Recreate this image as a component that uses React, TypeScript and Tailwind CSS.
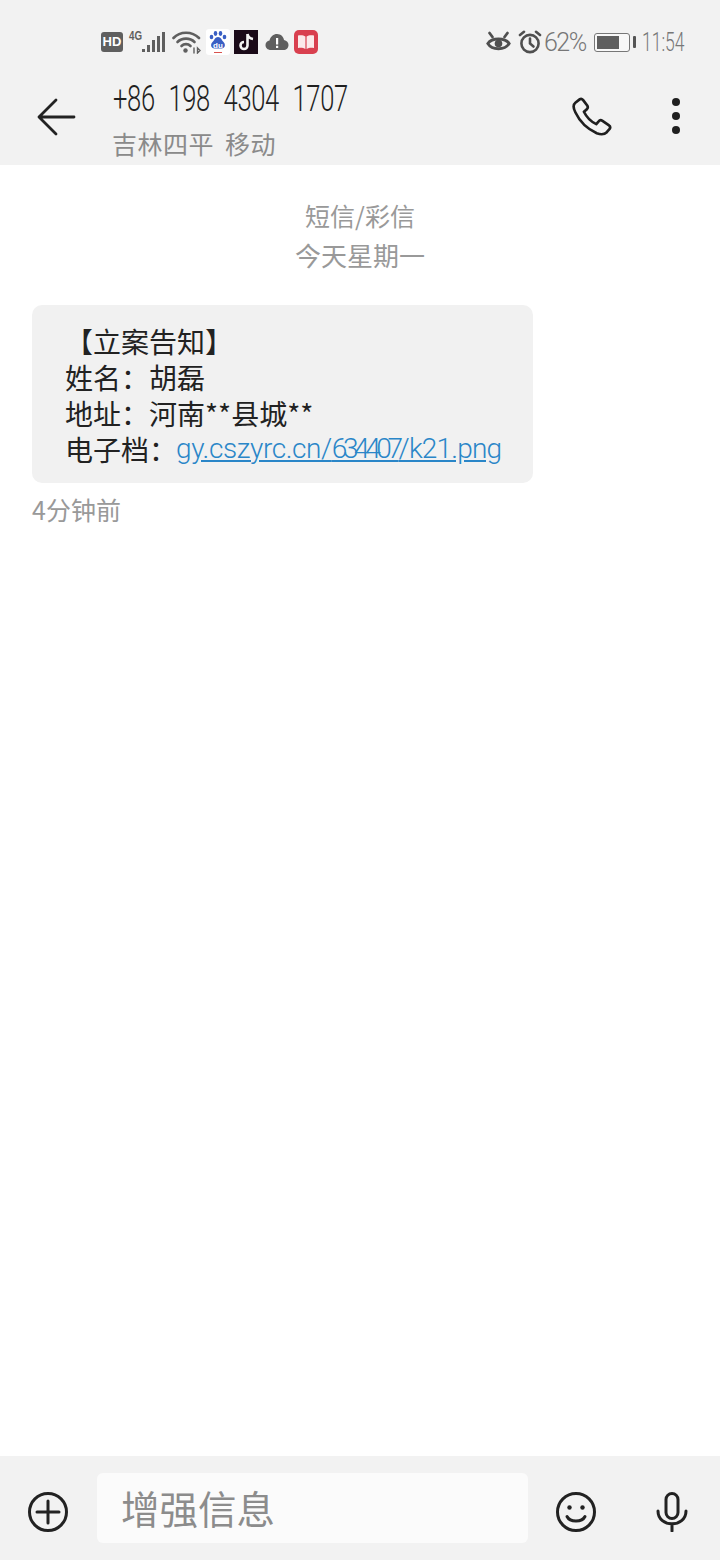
import React from 'react';

const cjk = { fontFamily: '"Noto Sans CJK SC", sans-serif' };

const HdBadge = () => (
  <span className="w-[22px] h-[20px] rounded-[3px] bg-[#5f5f5f] text-white text-[13px] font-bold leading-[20px] text-center font-['Liberation_Sans',sans-serif]">HD</span>
);

const SignalIcon = () => (
  <svg width="38" height="26" viewBox="0 0 38 26" fill="#5f5f5f">
    <text x="1" y="11" fontSize="12" fontWeight="700" fontFamily="Liberation Sans, sans-serif" textLength="13" lengthAdjust="spacingAndGlyphs">4G</text>
    <rect x="14" y="20" width="3" height="3" />
    <rect x="19" y="16" width="3" height="7" />
    <rect x="24" y="11" width="3" height="12" />
    <rect x="29" y="7" width="3" height="16" />
    <rect x="34" y="3" width="3" height="20" />
  </svg>
);

const WifiIcon = () => (
  <svg width="29" height="24" viewBox="0 0 29 24" fill="none" stroke="#5f5f5f" strokeWidth="2.6" strokeLinecap="round">
    <path d="M1.5 8 C8 1 20 1 27 8" />
    <path d="M5.5 12 C10 7.5 18 7.5 22.5 12" />
    <path d="M9.5 16 C12 13.5 16 13.5 18.5 16" />
    <circle cx="13.5" cy="20.5" r="2.2" fill="#5f5f5f" stroke="none" />
    <path d="M22 18 v5 M25.5 18 l2.5 2.5 -2.5 2.5z" strokeWidth="1.4" />
  </svg>
);

const BaiduIcon = () => (
  <span className="w-[24px] h-[26px] bg-white rounded-[3px] flex items-center justify-center">
    <svg width="20" height="24" viewBox="0 0 20 24">
      <g fill="#3a5fc4">
        <ellipse cx="3.5" cy="7" rx="1.8" ry="2.2" />
        <ellipse cx="7.5" cy="3.5" rx="1.8" ry="2.4" />
        <ellipse cx="12.5" cy="3.5" rx="1.8" ry="2.4" />
        <ellipse cx="16.5" cy="7" rx="1.8" ry="2.2" />
        <path d="M10 7 C7 7 6.5 10 4.5 12 C2 14.5 3 18.5 6.5 18.5 L13.5 18.5 C17 18.5 18 14.5 15.5 12 C13.5 10 13 7 10 7 Z" />
      </g>
      <text x="10" y="17.5" textAnchor="middle" fontSize="8" fontWeight="700" fill="#fff" fontFamily="Liberation Sans, sans-serif">du</text>
      <rect x="6" y="22" width="8" height="1" fill="#d9534f" />
    </svg>
  </span>
);

const TiktokIcon = () => (
  <span className="w-[24px] h-[24px] bg-[#1a0a18] flex items-center justify-center">
    <svg width="16" height="18" viewBox="0 0 16 18" fill="none" strokeWidth="2.6">
      <path d="M9.5 1 V12.5 A3.5 3.5 0 1 1 6 9 M9.5 1 C10 4 12 5.5 15 6" stroke="#f3f3f3" />
    </svg>
  </span>
);

const CloudIcon = () => (
  <svg width="24" height="18" viewBox="0 0 24 18">
    <path d="M6 17 C2.5 17 0.5 14.7 0.5 12 C0.5 9.5 2.3 7.8 4.5 7.5 C5.5 3.5 8.5 1 12 1 C16 1 18.5 3.8 19 7 C21.8 7.5 23.5 9.5 23.5 12 C23.5 15 21.3 17 18.5 17 Z" fill="#5f5f5f" />
    <rect x="11" y="5" width="2.2" height="6.5" fill="#fff" />
    <rect x="11" y="12.8" width="2.2" height="2.2" fill="#fff" />
  </svg>
);

const BooksIcon = () => (
  <span className="w-[24px] h-[24px] rounded-[5px] bg-[#d9404f] flex items-center justify-center">
    <svg width="18" height="16" viewBox="0 0 18 16" fill="#fbeaea">
      <path d="M1 1.5 C4 1 6.5 1.2 8.4 2.5 V15 C6.5 13.8 4 13.5 1 14 Z" />
      <path d="M17 1.5 C14 1 11.5 1.2 9.6 2.5 V15 C11.5 13.8 14 13.5 17 14 Z" />
    </svg>
  </span>
);

const EyeIcon = () => (
  <svg width="25" height="22" viewBox="0 0 25 22" fill="none" stroke="#4f4f4f" strokeWidth="2.8" strokeLinecap="round">
    <path d="M1.8 12.5 C6 6.5 19 6.5 23.2 12.5 C19 19.5 6 19.5 1.8 12.5 Z" />
    <circle cx="12.5" cy="12.5" r="3.8" fill="#4f4f4f" stroke="none" />
    <path d="M3.5 2 L6.5 6 M21.5 2 L18.5 6" />
  </svg>
);

const AlarmIcon = () => (
  <svg width="24" height="24" viewBox="0 0 24 24" fill="none" stroke="#4f4f4f" strokeWidth="2.6" strokeLinecap="round">
    <circle cx="12" cy="13.5" r="8.6" />
    <path d="M12 8.5 V13.5 L15.5 16.5" />
    <path d="M2 5 L6 1.8 M22 5 L18 1.8" />
  </svg>
);

const BatteryIcon = () => (
  <div className="flex items-center gap-[3px]">
    <div className="w-[36px] h-[19px] border-[1.5px] border-[#777] rounded-[3px] p-[2px] bg-[#f8f8f8]">
      <div className="w-[22px] h-full bg-[#5f5f5f]" />
    </div>
    <div className="w-[3px] h-[12px] bg-[#555] rounded-[1px]" />
  </div>
);

const StatusBar = () => (
  <div className="h-[69px] pl-[101px] pr-[36px] pt-[27px] flex items-start justify-between">
    <div className="flex items-center h-[30px]">
      <HdBadge />
      <span className="ml-[5px]"><SignalIcon /></span>
      <span className="ml-[6px]"><WifiIcon /></span>
      <span className="ml-[5px]"><BaiduIcon /></span>
      <span className="ml-[4px]"><TiktokIcon /></span>
      <span className="ml-[7px]"><CloudIcon /></span>
      <span className="ml-[5px]"><BooksIcon /></span>
    </div>
    <div className="flex items-center h-[30px] text-[#777] text-[25px] font-light font-['Roboto',sans-serif]">
      <EyeIcon />
      <span className="ml-[7px]"><AlarmIcon /></span>
      <span className="ml-[2px] w-[43px] mt-[2px] tracking-[-1.5px] whitespace-nowrap">62%</span>
      <span className="ml-[7px]"><BatteryIcon /></span>
      <span className="ml-[6px] w-[42px] mt-[2px] whitespace-nowrap origin-left scale-x-[0.7]">11:54</span>
    </div>
  </div>
);

const Header = () => (
  <div className="h-[96px] pl-[36px] pr-[40px] flex items-start">
    <svg className="mt-[28px]" width="40" height="40" viewBox="0 0 40 40" fill="none" stroke="#222" strokeWidth="2.8" strokeLinecap="round" strokeLinejoin="round">
      <path d="M38 20 H3 M20 3 L3 20 L20 37" />
    </svg>
    <div className="ml-[37px] flex-1">
      <div className="h-[60px] text-[36px] leading-[60px] font-light text-[#1f1f1f] font-['Roboto',sans-serif] tracking-[-0.5px] [word-spacing:11px] whitespace-pre origin-left scale-x-[0.71]">+86 198 4304 1707</div>
      <div className="text-[25px] leading-[30px] -mt-[1px] -ml-[1px] tracking-[0.5px] [word-spacing:5px] text-[#8a8a8a]" style={cjk}>吉林四平 移动</div>
    </div>
    <svg className="mt-[28px]" width="40" height="40" viewBox="0 0 42 42" fill="none" stroke="#1f1f1f" strokeWidth="2.8" strokeLinejoin="round">
      <path d="M8 2.5 L3.5 6 C1 8 1.5 12 3.5 16 C8 25.5 16 33.5 26 38 C30 39.5 34 39.5 36.5 37 L39.5 33.5 C40.5 32 40 30.5 38.5 29.5 L32 25 C30.5 24 29 24.2 28 25.5 L25.5 28.5 C20 26 15 20.5 12.5 15.5 L15.5 13 C16.5 12 17 10.5 16 9 L11.5 3 C10.5 1.8 9.2 1.6 8 2.5 Z" />
    </svg>
    <div className="ml-[60px] mt-[29px] flex flex-col gap-[6px]">
      <div className="w-[8px] h-[8px] rounded-full bg-[#1f1f1f]" />
      <div className="w-[8px] h-[8px] rounded-full bg-[#1f1f1f]" />
      <div className="w-[8px] h-[8px] rounded-full bg-[#1f1f1f]" />
    </div>
  </div>
);

const MessageBubble = () => (
  <div className="ml-[32px] mt-[30px] w-[501px] h-[178px] rounded-[10px] bg-[#f1f1f1] pl-[33px] pt-[18px] text-[28px] leading-[36px] text-[#222]" style={cjk}>
    <div className="whitespace-pre">【立案告知】</div>
    <div>姓名：胡磊</div>
    <div>地址：河南**县城**</div>
    <div className="flex">
      <span>电子档：</span>
      <span className="-ml-[1px] text-[#2a86c8] underline font-['Roboto',sans-serif] font-light whitespace-pre">
        <span className="tracking-[-0.4px]">gy.cszyrc.cn/</span><span className="tracking-[-4.4px]">634407</span><span className="tracking-[-0.8px]">/k21.png</span>
      </span>
    </div>
  </div>
);

const InputBar = () => (
  <div className="h-[104px] bg-[#f2f2f2] pl-[28px] pr-[32px] flex items-center">
    <svg className="mt-[8px]" width="40" height="40" viewBox="0 0 40 40" fill="none" stroke="#222" strokeWidth="3" strokeLinecap="round">
      <circle cx="20" cy="20" r="18.5" />
      <path d="M20 9 V31 M9 20 H31" />
    </svg>
    <div className="ml-[29px] w-[431px] h-[70px] rounded-[6px] bg-[#fbfbfb] pl-[24px] flex items-center text-[38.5px] text-[#8c8c8c]" style={cjk}>增强信息</div>
    <svg className="ml-[28px] mt-[8px]" width="40" height="40" viewBox="0 0 40 40" fill="none" stroke="#222" strokeWidth="3" strokeLinecap="round">
      <circle cx="20" cy="20" r="18.5" />
      <circle cx="13.5" cy="15.5" r="2.2" fill="#222" stroke="none" />
      <circle cx="26.5" cy="15.5" r="2.2" fill="#222" stroke="none" />
      <path d="M11 24.5 C14 30.5 26 30.5 29 24.5" />
    </svg>
    <svg className="ml-[60px] mt-[8px]" width="32" height="40" viewBox="0 0 32 40" fill="none" stroke="#222" strokeWidth="3" strokeLinecap="round">
      <rect x="10" y="1.5" width="12" height="25" rx="6" />
      <path d="M2 19 C2 36 30 36 30 19 M16 32 V39" />
    </svg>
  </div>
);

export default function App() {
  return (
    <div className="w-[720px] h-[1560px] flex flex-col bg-white overflow-hidden">
      <div className="bg-[#f2f2f2] h-[165px]">
        <StatusBar />
        <Header />
      </div>
      <div className="flex-1">
        <div className="pt-[30px] text-center leading-[40px] text-[#999]" style={cjk}>
          <div className="text-[25px]">短信/彩信</div>
          <div className="text-[26px]">今天星期一</div>
        </div>
        <MessageBubble />
        <div className="ml-[32px] mt-[10px] text-[25px] leading-[32px] text-[#999]" style={cjk}>4分钟前</div>
      </div>
      <InputBar />
    </div>
  );
}
